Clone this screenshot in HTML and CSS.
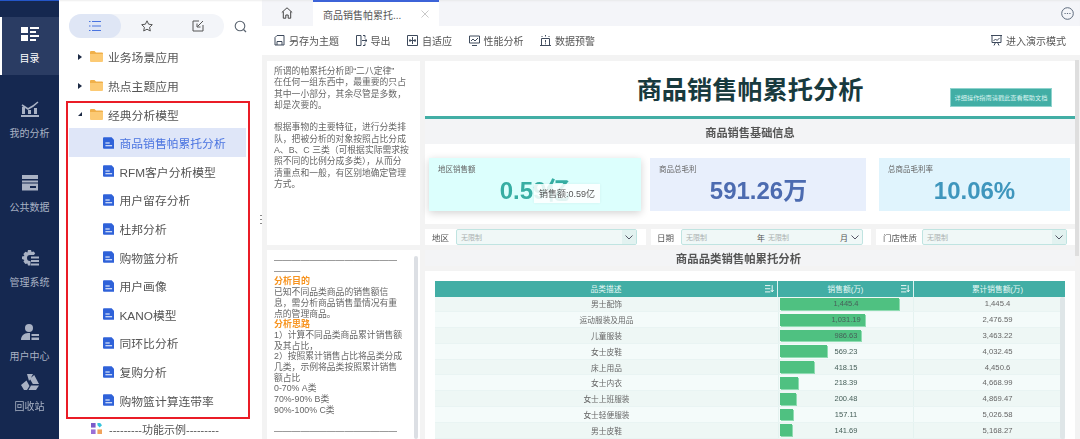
FILE: index.html
```html
<!DOCTYPE html>
<html lang="zh-CN">
<head>
<meta charset="utf-8">
<title>商品销售帕累托分析</title>
<link rel="stylesheet" href="styles.css">
</head>
<body>
<div class="app">
  <nav class="rail">
    <a class="rail-item active">
      <svg class="rail-icon" viewBox="0 0 18 16"><path d="M0 1h7v6H0zM0 9h7v6H0zM9 1h9v2H9zM9 5h6v2H9zM9 9h9v2H9zM9 13h6v2H9z"/></svg>
      <span>目录</span>
    </a>
    <a class="rail-item">
      <svg class="rail-icon" viewBox="0 0 18 16"><path d="M1 6h3v7H1zM7 9h3v4H7zM13 7h3v6h-3zM0 14h18v2H0z"/><path d="M1 4l6 4 5-3 5-4" fill="none" stroke="currentColor" stroke-width="1.6"/></svg>
      <span>我的分析</span>
    </a>
    <a class="rail-item">
      <svg class="rail-icon" viewBox="0 0 18 16"><path d="M1 0h16v4H1zM1 5.500h16v2H1zM1 8.500h16v7H1z"/><path d="M9 11h6v2H9z" fill="#152850"/></svg>
      <span>公共数据</span>
    </a>
    <a class="rail-item">
      <svg class="rail-icon" viewBox="0 0 18 16"><path d="M7 0h3l.6 2 2-.6 1.600 1.800L13 5H9a3 3 0 0 0 0 6h.5v4.500H7l-.6-2-2 .6-2-2.500 1-1.600L1 9V6.500l2.400-.6-1-1.800 2-2.300 2 .6z"/><path d="M10 6.500h8v2h-8zM10 10h8v2h-8zM10 13.500h8v2h-8z"/></svg>
      <span>管理系统</span>
    </a>
    <a class="rail-item">
      <svg class="rail-icon" viewBox="0 0 18 16"><circle cx="8" cy="4" r="4"/><path d="M0 16c0-4 3-7 7-7h2v7zM10.500 10H18v2h-7.500zM10.500 13.500H18V16h-7.500z"/></svg>
      <span>用户中心</span>
    </a>
    <a class="rail-item tight">
      <svg class="rail-icon" viewBox="0 0 18 16"><path d="M6 0h6l-3 5.500-1 1.500zM13.200 1l4.800 9h-6.200L8.800 4.800zM5.500 6.500l3 5.500L6 16H3L0 11z"/><path d="M10 11.500h8L15 16H7.500z"/></svg>
      <span>回收站</span>
    </a>
  </nav>

  <aside class="tree-panel">
    <div class="tree-head">
      <div class="tree-tabs">
        <span class="tree-tab on">
          <svg class="i12 blue" viewBox="0 0 12 12"><path d="M0 1.500h1.500M3 1.500h9M0 6h1.500M3 6h9M0 10.500h1.500M3 10.500h9" stroke="currentColor" stroke-width="1.200" fill="none"/></svg>
        </span>
        <span class="tree-tab">
          <svg class="i12" viewBox="0 0 12 12"><path d="M6 .8l1.600 3.400 3.700.5-2.700 2.600.7 3.700L6 9.200 2.700 11l.7-3.700L.7 4.700l3.700-.5z" fill="none" stroke="currentColor"/></svg>
        </span>
        <span class="tree-tab">
          <svg class="i12" viewBox="0 0 12 12"><path d="M7 1H1v10h10V5M11 1L5.500 6.500M5 3.500v3.500h3.500" fill="none" stroke="currentColor"/></svg>
        </span>
      </div>
      <svg class="search" viewBox="0 0 13 13"><circle cx="6" cy="6" r="4.800" fill="none" stroke="currentColor" stroke-width="1.100"/><path d="M9.500 9.500L12 12" stroke="currentColor" stroke-width="1.200"/></svg>
    </div>

    <ul class="tree">
      <li class="row"><i class="arrow"></i><svg class="folder" viewBox="0 0 13 11"><path d="M0 1a1 1 0 0 1 1-1h3.500l1.500 1.500H12a1 1 0 0 1 1 1V3H0z" fill="#f0b04a"/><path d="M0 3h13v7a1 1 0 0 1-1 1H1a1 1 0 0 1-1-1z" fill="#fcca74"/></svg><span>业务场景应用</span></li>
      <li class="row"><i class="arrow"></i><svg class="folder" viewBox="0 0 13 11"><path d="M0 1a1 1 0 0 1 1-1h3.500l1.500 1.500H12a1 1 0 0 1 1 1V3H0z" fill="#f0b04a"/><path d="M0 3h13v7a1 1 0 0 1-1 1H1a1 1 0 0 1-1-1z" fill="#fcca74"/></svg><span>热点主题应用</span></li>
      <li class="row"><i class="arrow open"></i><svg class="folder" viewBox="0 0 13 11"><path d="M0 1a1 1 0 0 1 1-1h3.500l1.500 1.500H12a1 1 0 0 1 1 1V3H0z" fill="#f0b04a"/><path d="M0 3h13v7a1 1 0 0 1-1 1H1a1 1 0 0 1-1-1z" fill="#fcca74"/></svg><span>经典分析模型</span></li>
      <li class="row child current"><svg class="doc" viewBox="0 0 12 12"><path d="M1 0h8l3 3v8a1 1 0 0 1-1 1H1a1 1 0 0 1-1-1V1a1 1 0 0 1 1-1z" fill="#2f62d9"/><path d="M2.500 6h4.500M2.500 8.800h7" stroke="#fff" stroke-width="1.100"/></svg><span>商品销售帕累托分析</span></li>
      <li class="row child"><svg class="doc" viewBox="0 0 12 12"><path d="M1 0h8l3 3v8a1 1 0 0 1-1 1H1a1 1 0 0 1-1-1V1a1 1 0 0 1 1-1z" fill="#2f62d9"/><path d="M2.500 6h4.500M2.500 8.800h7" stroke="#fff" stroke-width="1.100"/></svg><span>RFM客户分析模型</span></li>
      <li class="row child"><svg class="doc" viewBox="0 0 12 12"><path d="M1 0h8l3 3v8a1 1 0 0 1-1 1H1a1 1 0 0 1-1-1V1a1 1 0 0 1 1-1z" fill="#2f62d9"/><path d="M2.500 6h4.500M2.500 8.800h7" stroke="#fff" stroke-width="1.100"/></svg><span>用户留存分析</span></li>
      <li class="row child"><svg class="doc" viewBox="0 0 12 12"><path d="M1 0h8l3 3v8a1 1 0 0 1-1 1H1a1 1 0 0 1-1-1V1a1 1 0 0 1 1-1z" fill="#2f62d9"/><path d="M2.500 6h4.500M2.500 8.800h7" stroke="#fff" stroke-width="1.100"/></svg><span>杜邦分析</span></li>
      <li class="row child"><svg class="doc" viewBox="0 0 12 12"><path d="M1 0h8l3 3v8a1 1 0 0 1-1 1H1a1 1 0 0 1-1-1V1a1 1 0 0 1 1-1z" fill="#2f62d9"/><path d="M2.500 6h4.500M2.500 8.800h7" stroke="#fff" stroke-width="1.100"/></svg><span>购物篮分析</span></li>
      <li class="row child"><svg class="doc" viewBox="0 0 12 12"><path d="M1 0h8l3 3v8a1 1 0 0 1-1 1H1a1 1 0 0 1-1-1V1a1 1 0 0 1 1-1z" fill="#2f62d9"/><path d="M2.500 6h4.500M2.500 8.800h7" stroke="#fff" stroke-width="1.100"/></svg><span>用户画像</span></li>
      <li class="row child"><svg class="doc" viewBox="0 0 12 12"><path d="M1 0h8l3 3v8a1 1 0 0 1-1 1H1a1 1 0 0 1-1-1V1a1 1 0 0 1 1-1z" fill="#2f62d9"/><path d="M2.500 6h4.500M2.500 8.800h7" stroke="#fff" stroke-width="1.100"/></svg><span>KANO模型</span></li>
      <li class="row child"><svg class="doc" viewBox="0 0 12 12"><path d="M1 0h8l3 3v8a1 1 0 0 1-1 1H1a1 1 0 0 1-1-1V1a1 1 0 0 1 1-1z" fill="#2f62d9"/><path d="M2.500 6h4.500M2.500 8.800h7" stroke="#fff" stroke-width="1.100"/></svg><span>同环比分析</span></li>
      <li class="row child"><svg class="doc" viewBox="0 0 12 12"><path d="M1 0h8l3 3v8a1 1 0 0 1-1 1H1a1 1 0 0 1-1-1V1a1 1 0 0 1 1-1z" fill="#2f62d9"/><path d="M2.500 6h4.500M2.500 8.800h7" stroke="#fff" stroke-width="1.100"/></svg><span>复购分析</span></li>
      <li class="row child"><svg class="doc" viewBox="0 0 12 12"><path d="M1 0h8l3 3v8a1 1 0 0 1-1 1H1a1 1 0 0 1-1-1V1a1 1 0 0 1 1-1z" fill="#2f62d9"/><path d="M2.500 6h4.500M2.500 8.800h7" stroke="#fff" stroke-width="1.100"/></svg><span>购物篮计算连带率</span></li>
      <li class="row func"><svg class="folder" viewBox="0 0 12 12"><path d="M0 0h5v5H0z" fill="#7b5bc9"/><path d="M7 0l3 0 2 2.500L9.500 5 7 2.500z" fill="#35c4dc"/><path d="M0 7h5v5H0z" fill="#9a6fd6"/><path d="M7 7h5v5H7z" fill="#f0a35c"/></svg><span>---------功能示例---------</span></li>
    </ul>
    <div class="callout"></div>
    <div class="grip"></div>
  </aside>

  <main class="workspace">
    <header class="tabbar">
      <svg class="home" viewBox="0 0 12 12"><path d="M.8 5.500L6 .8l5.200 4.700M2.300 4.500v6.700h2.500V8h2.400v3.200h2.500V4.500" fill="none" stroke="currentColor"/></svg>
      <div class="tab">
        <span>商品销售帕累托...</span>
        <svg class="close" viewBox="0 0 8 8"><path d="M.5.500l7 7M7.500.500l-7 7" stroke="currentColor" stroke-width=".8"/></svg>
      </div>
      <svg class="more" viewBox="0 0 13 13"><circle cx="6.500" cy="6.500" r="5.800" fill="none" stroke="currentColor"/><path d="M3.500 6.500h1.200M5.900 6.500h1.200M8.300 6.500h1.200" stroke="currentColor"/></svg>
    </header>

    <div class="toolbar">
      <a class="tool"><svg viewBox="0 0 11 11"><path d="M1 10V2.500L3 .5h7V10zM3 10V6.500h5V10" fill="none" stroke="currentColor"/></svg>另存为主题</a>
      <a class="tool"><svg viewBox="0 0 11 11"><path d="M5 .5H.5v10H5V.5zM7 .5h2v2M7 10.500h2v-2M6 5.500h5M9 3.500l2 2-2 2" fill="none" stroke="currentColor"/></svg>导出</a>
      <a class="tool"><svg viewBox="0 0 11 11"><path d="M.5.500h10v10H.5zM5.500 2v7M2 5.500h7M3 4v3M8 4v3" fill="none" stroke="currentColor"/></svg>自适应</a>
      <a class="tool"><svg viewBox="0 0 11 11"><path d="M.5 1h10v7H.5zM3 10.500h5M2 6l2-2 2 2 3-3" fill="none" stroke="currentColor"/></svg>性能分析</a>
      <a class="tool"><svg viewBox="0 0 11 11"><path d="M1.500 10.500v-7h8v7zM0 10.500h11M5.500 0v1.500M1.500 1l1 1M9.500 1l-1 1M5.500 5v2.500M5.500 8.300v1" fill="none" stroke="currentColor"/></svg>数据预警</a>
      <a class="tool present"><svg viewBox="0 0 11 11"><path d="M0 .5h11M1 .5v7h9v-7M2.500 6L4.500 4l1.500 1.500L8.500 3M3 10.500l1.500-3M8 10.500l-1.500-3" fill="none" stroke="currentColor"/></svg>进入演示模式</a>
    </div>

    <div class="content">
      <div class="notes">
        <section class="note intro">
          <p>所谓的帕累托分析即“二八定律”<br>在任何一组东西中，最重要的只占<br>其中一小部分，其余尽管是多数，<br>却是次要的。</p>
          <p>根据事物的主要特征，进行分类排<br>队，把被分析的对象按照占比分成<br>A、B、C 三类（可根据实际需求按<br>照不同的比例分成多类），从而分<br>清重点和一般，有区别地确定管理<br>方式。</p>
        </section>
        <section class="note guide">
          <div class="guide-text">
            ——————————————<br>———<br>
            <b>分析目的</b><br>
            已知不同品类商品的销售额信<br>息，需分析商品销售量情况有重<br>点的管理商品。<br>
            <b>分析思路</b><br>
            1）计算不同品类商品累计销售额<br>及其占比，<br>
            2）按照累计销售占比将品类分成<br>几类，示例将品类按照累计销售<br>额占比<br>
            0-70% A类<br>70%-90% B类<br>90%-100% C类<br><br>
            ——————————————
          </div>
          <div class="note-scroll"></div>
        </section>
      </div>

      <div class="report">
        <div class="hero">
          <h1>商品销售帕累托分析</h1>
          <a class="help">详细操作指南请戳此查看帮助文档</a>
        </div>
        <h2 class="band">商品销售基础信息</h2>
        <div class="kpis">
          <div class="kpi k1"><label>地区销售额</label><strong>0.59亿</strong><div class="tip">销售额:0.59亿</div></div>
          <div class="kpi k2"><label>商品总毛利</label><strong>591.26万</strong></div>
          <div class="kpi k3"><label>总商品毛利率</label><strong>10.06%</strong></div>
        </div>
        <div class="filters">
          <div class="filter f1"><label>地区</label><div class="select"><span class="ph">无限制</span><i class="drop"><svg viewBox="0 0 8 5"><path d="M.5.500L4 4 7.500.500" fill="none" stroke="currentColor"/></svg></i></div></div>
          <div class="filter f2"><label>日期</label><div class="select"><span class="ph">无限制</span><em class="unit-y">年</em><span class="ph">无限制</span><em class="unit-m">月</em><i class="drop"><svg viewBox="0 0 8 5"><path d="M.5.500L4 4 7.500.500" fill="none" stroke="currentColor"/></svg></i></div></div>
          <div class="filter f3"><label>门店性质</label><div class="select"><span class="ph">无限制</span><i class="drop"><svg viewBox="0 0 8 5"><path d="M.5.500L4 4 7.500.500" fill="none" stroke="currentColor"/></svg></i></div></div>
        </div>
        <h2 class="band slim">商品品类销售帕累托分析</h2>
        <div class="table-wrap">
          <div class="thead">
            <div class="th c1">品类描述<svg class="sort" viewBox="0 0 10 8"><path d="M0 .5h6M0 4h6M0 7.500h6M8 0v7M6.500 5.500L8 7.500l1.500-2" fill="none" stroke="currentColor"/></svg></div>
            <div class="th c2">销售额(万)<svg class="sort" viewBox="0 0 10 8"><path d="M0 .5h6M0 4h6M0 7.500h6M8 0v7M6.500 5.500L8 7.500l1.500-2" fill="none" stroke="currentColor"/></svg></div>
            <div class="th c3">累计销售额(万)</div>
          </div>
          <div class="tr"><div class="td c1">男士配饰</div><div class="td c2"><i class="bar" style="width:119px"></i><span>1,445.4</span></div><div class="td c3">1,445.4</div></div>
          <div class="tr"><div class="td c1">运动服装及用品</div><div class="td c2"><i class="bar" style="width:85px"></i><span>1,031.19</span></div><div class="td c3">2,476.59</div></div>
          <div class="tr"><div class="td c1">儿童服装</div><div class="td c2"><i class="bar" style="width:81px"></i><span>986.63</span></div><div class="td c3">3,463.22</div></div>
          <div class="tr"><div class="td c1">女士皮鞋</div><div class="td c2"><i class="bar" style="width:47px"></i><span>569.23</span></div><div class="td c3">4,032.45</div></div>
          <div class="tr"><div class="td c1">床上用品</div><div class="td c2"><i class="bar" style="width:34px"></i><span>418.15</span></div><div class="td c3">4,450.6</div></div>
          <div class="tr"><div class="td c1">女士内衣</div><div class="td c2"><i class="bar" style="width:18px"></i><span>218.39</span></div><div class="td c3">4,668.99</div></div>
          <div class="tr"><div class="td c1">女士上班服装</div><div class="td c2"><i class="bar" style="width:16px"></i><span>200.48</span></div><div class="td c3">4,869.47</div></div>
          <div class="tr"><div class="td c1">女士轻便服装</div><div class="td c2"><i class="bar" style="width:13px"></i><span>157.11</span></div><div class="td c3">5,026.58</div></div>
          <div class="tr"><div class="td c1">男士皮鞋</div><div class="td c2"><i class="bar" style="width:12px"></i><span>141.69</span></div><div class="td c3">5,168.27</div></div>
          <div class="table-scroll"></div>
        </div>
      </div>
      <div class="page-scroll"></div>
    </div>
  </main>
</div>
</body>
</html>
```

FILE: styles.css
```css
* { box-sizing: border-box; }
html, body { margin: 0; height: 100%; overflow: hidden; }
body {
  font-family: "Liberation Sans", "Noto Sans CJK SC", sans-serif;
  color: #555;
  background: #f3f3f3;
}
h1, h2, p, ul { margin: 0; padding: 0; }
svg { display: block; }

.app { display: flex; height: 439px; filter: blur(.4px); }

/* left rail */
.rail {
  width: 59px;
  flex: none;
  background: #152850;
  border-top: 1px solid #2456c8;
  padding-top: 16px;
  display: flex;
  flex-direction: column;
  gap: 16.500px;
  color: #a9b2c4;
}
.rail-item {
  height: 58px;
  padding-top: 8px;
  display: flex;
  flex-direction: column;
  align-items: center;
  font-size: 10px;
  line-height: 12px;
  flex: none;
  border-left: 2px solid transparent;
  margin-right: 0;
}
.rail-item span { margin-left: -2px; margin-top: 10px; }
.rail-icon { width: 18px; height: 18px; fill: currentColor; margin-left: -2px; }
.rail-item.active { background: #2a3c63; border-left-color: #fff; color: #fff; }
.rail-item.active .rail-icon { color: #fff; }
.rail-item.tight { margin-top: -25px; }

/* tree */
.tree-panel { width: 203px; flex: none; background: #fff; position: relative; box-shadow: inset 0 2px 2px -1px #eee; }
.tree-head { display: flex; align-items: center; padding: 14px 0 0 10px; height: 38px; }
.tree-tabs { width: 155px; height: 24px; border-radius: 12px; background: #f3f5f9; display: flex; color: #555; }
.tree-tab { flex: 1; display: flex; align-items: center; justify-content: center; border-radius: 12px; }
.tree-tab.on { background: #dfe6f5; }
.i12 { width: 12px; height: 12px; }
.i12.blue { color: #4a74e0; }
.search { width: 13px; height: 13px; margin-left: 9.500px; color: #5a6470; }
.tree { list-style: none; padding: 4.700px 16px 0 10px; }
.row { height: 28.600px; display: flex; align-items: center; font-size: 11.800px; color: #555; white-space: nowrap; }
.arrow { width: 0; height: 0; margin-left: 9px; margin-right: 8px; border-left: 4px solid #1c2a44; border-top: 3px solid transparent; border-bottom: 3px solid transparent; }
.arrow.open { border-left: 4px solid transparent; border-top: 0; border-bottom: 4px solid #1c2a44; border-right: 0; }
.folder { width: 13px; height: 11px; margin-right: 5px; }
.row.func .folder { width: 11px; height: 11px; margin: 0 7px 0 22px; }
.row.func { font-size: 11px; }
.doc { width: 11.500px; height: 12px; margin: 0 5.500px 0 33.500px; }
.row.current { background: #dfe6f8; color: #4a74e0; }
.callout { position: absolute; left: 7px; top: 101px; width: 184px; height: 318px; border: 2px solid #ea1c26; }
.grip { position: absolute; right: 0; top: 215px; width: 2px; height: 10px; background: repeating-linear-gradient(#888 0 1px, transparent 1px 4px); }

/* workspace */
.workspace { flex: 1; min-width: 0; display: flex; flex-direction: column; }
.tabbar { height: 26px; background: #f4f5f9; display: flex; align-items: center; box-shadow: inset 0 2px 2px -1px #e8e8ea; color: #555; flex: none; }
.home { width: 12px; height: 12px; margin-left: 19px; color: #444; }
.tab { width: 126px; height: 26px; margin-left: 20px; background: #fff; border-top: 2px solid #3c63d8; display: flex; align-items: center; padding-left: 10px; font-size: 10px; position: relative; }
.close { width: 8px; height: 8px; color: #bbb; margin-left: 20px; }
.more { width: 13px; height: 13px; margin-left: auto; margin-right: 6.500px; color: #5d6a7c; }
.toolbar { height: 29px; background: #fff; display: flex; align-items: center; padding-left: 12px; gap: 16.500px; flex: none; }
.tool { display: flex; align-items: center; gap: 4px; font-size: 10px; color: #555; }
.tool svg { width: 11px; height: 11px; color: #3e4a5c; }
.tool.present { margin-left: auto; margin-right: 14px; }

/* content */
.content { flex: 1; min-height: 0; display: flex; padding: 6px 0 0 5px; gap: 5px; }
.notes { width: 153px; flex: none; display: flex; flex-direction: column; gap: 5px; }
.note { background: #fff; font-size: 8.800px; color: #666; padding: 5px 0 0 7px; white-space: nowrap; }
.intro { height: 184px; line-height: 11.300px; }
.intro p + p { margin-top: 11.300px; }
.guide { flex: 1; line-height: 10.700px; display: flex; position: relative; overflow: hidden; }
.guide b { color: #f7931e; font-size: 9px; }
.note-scroll { position: absolute; left: 147px; top: 6px; bottom: 0; width: 4px; background: #dcdfe4; border-radius: 2px; }

.report { width: 650px; flex: none; display: flex; flex-direction: column; margin-right: -5px; }
.hero { height: 58px; flex: none; background: #fff; border-bottom: 3px solid #42aea5; position: relative; display: flex; align-items: center; justify-content: center; padding-top: 4px; }
.hero h1 { font-size: 25.200px; font-weight: 700; color: #183a3e; line-height: 1; }
.help { position: absolute; left: 525px; top: 27px; width: 102px; height: 19px; background: #42aea5; border: 1px solid #8fd3cd; color: #d8f3f0; font-size: 6.200px; display: flex; align-items: center; justify-content: center; white-space: nowrap; }
.band { height: 25px; flex: none; background: #f3f4f6; font-size: 11.200px; font-weight: 700; color: #555; display: flex; align-items: center; justify-content: center; }
.band.slim { height: 16px; margin-top: 5px; margin-bottom: 5px; font-size: 11.400px; padding-right: 23px; }
.kpis { height: 80px; flex: none; background: #fff; padding: 14px 0 0 4px; display: flex; gap: 9px; }
.kpi { height: 53px; padding: 7px 0 0 9px; position: relative; }
.kpi label { display: block; font-size: 7.500px; line-height: 9px; color: #666; }
.kpi strong { display: block; text-align: center; font-size: 24px; line-height: 28px; margin: 3px 0 0 -9px; }
.k1 { width: 212px; background: #dcfffd; box-shadow: 0 2px 8px rgba(0,0,0,.18); }
.k1 strong { color: #37aea3; }
.k2 { width: 216px; background: #e8effc; }
.k2 strong { color: #4c6bb0; padding-left: 1px; }
.k3 { width: 191px; margin-left: 4px; background: #e0f4fd; }
.k3 strong { color: #3f96bd; }
.tip { position: absolute; left: 105px; top: 26px; width: 66px; height: 19px; background: rgba(255,255,255,.86); font-size: 9px; color: #555; display: flex; align-items: center; justify-content: center; white-space: nowrap; box-shadow: 0 0 3px rgba(0,0,0,.06); }

.filters { display: flex; gap: 5px; margin-top: 5px; flex: none; }
.filter { height: 16px; background: #fff; display: flex; align-items: center; font-size: 8.500px; color: #555; }
.filter label { white-space: nowrap; }
.f1 { width: 221px; padding-left: 7px; }
.f1 .select { width: 181px; margin-left: 7px; }
.f2 { width: 220px; padding-left: 6px; }
.f2 .select { width: 182px; margin-left: 7px; }
.f3 { width: 199px; padding-left: 7px; }
.f3 .select { width: 145px; margin-left: 5px; }
.select { height: 15.500px; background: #f0f8f7; border: 1px solid #c0e4e1; border-radius: 2px; display: flex; align-items: center; padding-left: 4px; position: relative; }
.ph { font-size: 7px; color: #aab0b0; white-space: nowrap; }
.select em { font-style: normal; font-size: 8px; color: #555; }
.unit-y { margin: 0 3px 0 50px; }
.unit-m { margin-left: 51px; }
.drop { margin-left: auto; width: 14px; height: 100%; background: #e2f2f0; display: flex; align-items: center; justify-content: center; color: #556; }
.drop svg { width: 8px; height: 5px; }
.f2 .drop { background: none; }

.table-wrap { flex: 1; min-height: 0; background: #fff; padding: 10px 10px 0; position: relative; overflow: hidden; }
.thead, .tr { display: grid; grid-template-columns: 343px 136px 151px; }
.thead { height: 15.500px; }
.th { background: #42aea5; color: #e8f8f6; font-size: 7.700px; display: flex; align-items: center; justify-content: center; position: relative; border-right: 1px solid #dff3f1; white-space: nowrap; }
.th.c3 { border-right: 0; padding-left: 16px; }
.sort { position: absolute; right: 3px; top: 4px; width: 9px; height: 7.500px; color: #fff; }
.tr { height: 15.800px; background: #f4fbfa; border-bottom: 1px solid #e9f4f3; }
.tr:nth-child(even) { background: #eef7f5; }
.td { font-size: 7.700px; color: #666; display: flex; align-items: center; justify-content: center; white-space: nowrap; position: relative; }
.td.c2 { border-left: 1px solid #e4f2f0; border-right: 1px solid #e4f2f0; }
.td.c3 { padding-left: 16px; }
.bar { position: absolute; left: 1px; top: 1.500px; bottom: 1.500px; background: #4fc181; box-shadow: 1px 1px 0 #8fdcb2; }
.td span { position: relative; color: #47605a; font-size: 7.500px; }
.table-scroll { position: absolute; right: 10px; top: 26px; bottom: 0; width: 5px; background: #dfe6e8; border-radius: 2px; }

.page-scroll { position: absolute; left: 1075px; top: 60px; width: 4px; height: 196px; background: #dedede; }
```
